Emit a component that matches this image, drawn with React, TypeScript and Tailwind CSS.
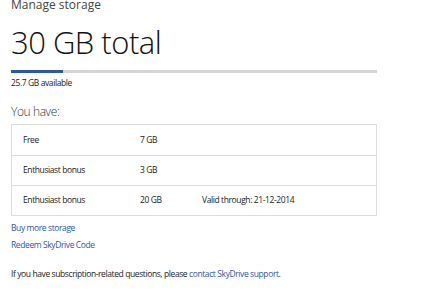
const rows = [
  { name: 'Free', size: '7 GB', note: '' },
  { name: 'Enthusiast bonus', size: '3 GB', note: '' },
  { name: 'Enthusiast bonus', size: '20 GB', note: 'Valid through: 21-12-2014' },
]

export default function App() {
  return (
    <div className="h-[300px] w-[422px] overflow-hidden bg-white pl-[11px] text-[#1a1a1a] [font-family:'Open_Sans',sans-serif]">
      <div className="-mt-[3px] text-[12px] leading-[16px] text-[#444]">Manage storage</div>
      <h1 className="mt-[11px] text-[31px] font-light leading-[36px] tracking-[-0.5px] text-[#111]">30 GB total</h1>

      <div className="mt-[10px] flex h-[3px] w-[366px] bg-[#d4d4d4]">
        <div className="h-full w-[52px] bg-[#2b57a8]" />
      </div>
      <div className="mt-[4px] text-[8.5px] leading-[12px] tracking-[-0.4px]">25.7 GB available</div>

      <div className="mt-[15px] text-[12px] font-light leading-[16px] tracking-[-0.4px] text-[#333]">You have:</div>

      <div className="mt-[4px] w-[366px] border border-[#dcdcdc]">
        {rows.map((r, i) => (
          <div
            key={i}
            className={`flex h-[30px] items-center pl-[11px] text-[8.5px] tracking-[-0.4px] ${i > 0 ? 'border-t border-[#dcdcdc]' : ''}`}
          >
            <span className="w-[117px]">{r.name}</span>
            <span className="w-[62px]">{r.size}</span>
            <span>{r.note}</span>
          </div>
        ))}
      </div>

      <div className="mt-[6px] flex flex-col gap-[5px] text-[8.5px] leading-[12px] tracking-[-0.4px] text-[#2c55b0]">
        <a>Buy more storage</a>
        <a>Redeem SkyDrive Code</a>
      </div>

      <p className="mt-[17px] text-[8.5px] leading-[12px] tracking-[-0.4px]">
        If you have subscription-related questions, please{' '}
        <a className="text-[#2c55b0]">contact SkyDrive support</a>.
      </p>
    </div>
  )
}
